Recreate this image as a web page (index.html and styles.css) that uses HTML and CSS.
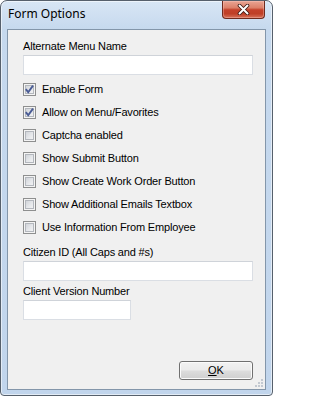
FILE: index.html
```html
<!DOCTYPE html>
<html>
<head>
<meta charset="utf-8">
<link rel="stylesheet" href="styles.css">
</head>
<body>
<div class="window">
  <div class="titlebar">
    <span class="title">Form Options</span>
    <div class="close">
      <svg width="13" height="11" viewBox="0 0 13 11">
        <path d="M2.5 1.5 L10.5 9.5 M10.5 1.5 L2.5 9.5" stroke="#3a1610" stroke-width="3.6" stroke-linecap="round" fill="none"/>
        <path d="M2.5 1.5 L10.5 9.5 M10.5 1.5 L2.5 9.5" stroke="#ffffff" stroke-width="2" stroke-linecap="round" fill="none"/>
      </svg>
    </div>
  </div>
  <div class="client">
    <div class="lbl">Alternate Menu Name</div>
    <div class="textbox wide"></div>
    <div class="checks">
      <div class="row"><span class="cb"><svg class="tick" width="11" height="11" viewBox="0 0 11 11"><path d="M1.8 5.2 L4.2 8.2 L9 1.6" stroke="#4a5c95" stroke-width="1.9" fill="none"/></svg></span><span class="txt">Enable Form</span></div>
      <div class="row"><span class="cb"><svg class="tick" width="11" height="11" viewBox="0 0 11 11"><path d="M1.8 5.2 L4.2 8.2 L9 1.6" stroke="#4a5c95" stroke-width="1.9" fill="none"/></svg></span><span class="txt">Allow on Menu/Favorites</span></div>
      <div class="row"><span class="cb"></span><span class="txt">Captcha enabled</span></div>
      <div class="row"><span class="cb"></span><span class="txt">Show Submit Button</span></div>
      <div class="row"><span class="cb"></span><span class="txt">Show Create Work Order Button</span></div>
      <div class="row"><span class="cb"></span><span class="txt">Show Additional Emails Textbox</span></div>
      <div class="row"><span class="cb"></span><span class="txt">Use Information From Employee</span></div>
    </div>
    <div class="lbl citizen">Citizen ID (All Caps and #s)</div>
    <div class="textbox wide"></div>
    <div class="lbl version">Client Version Number</div>
    <div class="textbox short"></div>
    <button class="ok"><u>O</u>K</button>
    <svg class="grip" width="9" height="9" viewBox="0 0 9 9">
      <rect x="6" y="0" width="2" height="2" fill="#c3c9d1"/>
      <rect x="3" y="3" width="2" height="2" fill="#c3c9d1"/>
      <rect x="6" y="3" width="2" height="2" fill="#c3c9d1"/>
      <rect x="0" y="6" width="2" height="2" fill="#c3c9d1"/>
      <rect x="3" y="6" width="2" height="2" fill="#c3c9d1"/>
      <rect x="6" y="6" width="2" height="2" fill="#c3c9d1"/>
    </svg>
  </div>
</div>
</body>
</html>
```
FILE: styles.css
```css
html, body {
  margin: 0;
  padding: 0;
  background: #ffffff;
}

.window {
  width: 273px;
  height: 396px;
  box-sizing: border-box;
  border: 1px solid #56606c;
  border-radius: 7px 7px 4px 4px;
  background: linear-gradient(to bottom, #d8e6f5 0px, #c6d9ee 28px, #c1d5ec 100%);
  box-shadow: inset 0 0 0 1px rgba(255, 255, 255, 0.55);
  display: flex;
  flex-direction: column;
  overflow: hidden;
}

.titlebar {
  height: 28px;
  flex: none;
  display: flex;
  align-items: flex-start;
}

.title {
  margin: 5px 0 0 7px;
  font-family: "Noto Sans", "Open Sans", sans-serif;
  font-size: 12px;
  line-height: 16px;
  color: #000000;
}

.close {
  margin-left: auto;
  margin-right: 7px;
  width: 43px;
  height: 18px;
  box-sizing: border-box;
  border: 1px solid #6f2a1d;
  border-top: none;
  border-radius: 0 0 4px 4px;
  background: linear-gradient(to bottom, #e9a594 0%, #dc8069 40%, #c4412a 52%, #bf3f26 75%, #d8725a 100%);
  box-shadow: inset 0 0 0 1px rgba(255, 210, 200, 0.35);
  display: flex;
  align-items: center;
  justify-content: center;
}

.close svg {
  display: block;
}

.client {
  position: relative;
  flex: 1;
  margin: 0 6px 5px 6px;
  border: 1px solid #8396aa;
  background: #f0f0f0;
  padding: 10px 12px 9px 15px;
  display: flex;
  flex-direction: column;
  align-items: flex-start;
  font-family: "Liberation Sans", Arial, sans-serif;
  font-size: 11px;
  letter-spacing: -0.17px;
  color: #000000;
}

.lbl {
  line-height: 13px;
  height: 13px;
  margin-bottom: 2px;
  white-space: nowrap;
}

.lbl.citizen {
  margin-top: 12px;
}

.lbl.version {
  margin-top: 4px;
}

.textbox {
  height: 20px;
  box-sizing: border-box;
  background: #ffffff;
  border: 1px solid #dadee4;
  border-top-color: #cfd3d9;
}

.textbox.wide {
  width: 230px;
}

.textbox.short {
  width: 108px;
}

.checks {
  margin-top: 8px;
  display: flex;
  flex-direction: column;
  gap: 10px;
}

.row {
  display: flex;
  align-items: center;
  gap: 6px;
  height: 13px;
}

.cb {
  position: relative;
  width: 13px;
  height: 13px;
  box-sizing: border-box;
  flex: none;
  border: 1px solid #8e8f8f;
  background: linear-gradient(135deg, #c7cbd1 0%, #e6e8eb 55%, #f8f8f8 100%);
  box-shadow: inset 0 0 0 1px #f4f4f4, inset 0 0 0 2px #b3b7bd;
}

.tick {
  position: absolute;
  left: 0;
  top: 0;
  display: block;
}

.txt {
  line-height: 13px;
  white-space: nowrap;
}

.ok {
  margin-top: auto;
  align-self: flex-end;
  width: 74px;
  height: 19px;
  box-sizing: border-box;
  padding: 0;
  border: 1px solid #707070;
  border-radius: 3px;
  background: linear-gradient(to bottom, #f2f2f2 0%, #ebebeb 48%, #dddddd 52%, #cfcfcf 100%);
  box-shadow: inset 0 0 0 1px #fbfbfb;
  font-family: "Liberation Sans", Arial, sans-serif;
  font-size: 11px;
  line-height: 17px;
  color: #000000;
  text-align: center;
}

.grip {
  position: absolute;
  right: 1px;
  bottom: 1px;
  display: block;
}
```
